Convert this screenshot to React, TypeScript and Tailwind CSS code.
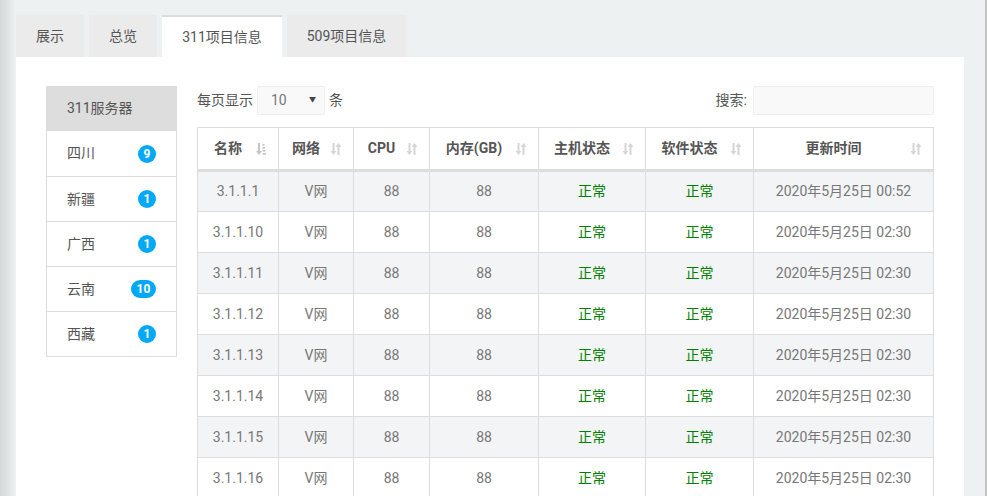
import React from "react";

const rows = [
  ["3.1.1.1", "2020年5月25日 00:52"],
  ["3.1.1.10", "2020年5月25日 02:30"],
  ["3.1.1.11", "2020年5月25日 02:30"],
  ["3.1.1.12", "2020年5月25日 02:30"],
  ["3.1.1.13", "2020年5月25日 02:30"],
  ["3.1.1.14", "2020年5月25日 02:30"],
  ["3.1.1.15", "2020年5月25日 02:30"],
  ["3.1.1.16", "2020年5月25日 02:30"],
];

const SortIcon = ({ active }: { active?: boolean }) =>
  active ? (
    <svg width="10" height="12" viewBox="0 0 10 12" className="absolute right-[12px] top-1/2 -translate-y-1/2">
      <path d="M2 0h2v8h2l-3 4-3-4h2z" fill="#c4c4c4" />
      <rect x="6.5" y="1" width="2" height="1.6" fill="#c4c4c4" />
      <rect x="6.5" y="4" width="2.5" height="1.6" fill="#c4c4c4" />
      <rect x="6.5" y="7" width="3" height="1.6" fill="#c4c4c4" />
      <rect x="6.5" y="10" width="3.5" height="1.6" fill="#c4c4c4" />
    </svg>
  ) : (
    <svg width="10" height="12" viewBox="0 0 10 12" className="absolute right-[12px] top-1/2 -translate-y-1/2">
      <path d="M1.5 0h2v8h2l-3 4-3-4h2z" fill="#d6d6d6" />
      <path d="M6.5 12h2V4h2l-3-4-3 4h2z" fill="#d6d6d6" />
    </svg>
  );

const headers: [string, number, boolean][] = [
  ["名称", 81, true],
  ["网络", 75, false],
  ["CPU", 76, false],
  ["内存(GB)", 109, false],
  ["主机状态", 107, false],
  ["软件状态", 108, false],
  ["更新时间", 180, false],
];

const regions: [string, string][] = [
  ["四川", "9"],
  ["新疆", "1"],
  ["广西", "1"],
  ["云南", "10"],
  ["西藏", "1"],
];

export default function App() {
  return (
    <div
      className="relative w-[987px] h-[496px] overflow-hidden bg-[#eef1f2] text-[14px] text-[#555]"
      style={{ fontFamily: 'Roboto, "Noto Sans CJK SC", sans-serif' }}
    >
      <div className="absolute left-0 top-0 h-full w-[16px] bg-gradient-to-r from-[#d3d7d8] to-[#eef1f2]" />
      <div className="absolute right-0 top-0 h-full w-[2px] bg-[#c2c2c2]" />
      <div className="relative pl-[16px] pr-[23px] pt-[15px]">
        <div className="flex gap-[5px] h-[42px]">
          <div className="flex items-center px-[20px] bg-[#ebebeb]">展示</div>
          <div className="flex items-center px-[20px] bg-[#ebebeb]">总览</div>
          <div className="flex items-center px-[20px] bg-white border-t-2 border-[#dcdcdc] w-[120px] justify-center">311项目信息</div>
          <div className="flex items-center justify-center w-[119px] bg-[#ebebeb]">509项目信息</div>
        </div>
        <div className="bg-white h-[460px] flex pl-[30px] pr-[31px] pt-[29px] gap-[20px]">
          <div className="w-[131px] shrink-0 self-start border border-[#dddddd] border-t-0">
            <div className="h-[45px] flex items-center pl-[20px] bg-[#dddddd]">311服务器</div>
            {regions.map(([name, n], i) => (
              <div
                key={name}
                className={`h-[45px] flex items-center justify-between pl-[20px] pr-[20px] ${i > 0 ? "border-t border-[#dddddd]" : ""}`}
              >
                <span>{name}</span>
                <span
                  className={`h-[18px] ${n.length > 1 ? "w-[25px]" : "w-[18px]"} rounded-full bg-[#03a9f4] text-white text-[12px] font-bold flex items-center justify-center leading-none`}
                >
                  {n}
                </span>
              </div>
            ))}
          </div>
          <div className="flex-1">
            <div className="flex items-center justify-between h-[29px]">
              <div className="flex items-center gap-[4px]">
                <span>每页显示</span>
                <div className="w-[68px] h-[29px] bg-[#f9f9f9] border border-[#eeeeee] rounded-[2px] flex items-center justify-between pl-[13px] pr-[8px]">
                  <span className="text-[#777]">10</span>
                  <span className="text-[7px] text-[#444]">▼</span>
                </div>
                <span>条</span>
              </div>
              <div className="flex items-center gap-[6px]">
                <span>搜索:</span>
                <div className="w-[181px] h-[29px] bg-[#f9f9f9] border border-[#eeeeee] rounded-[2px]" />
              </div>
            </div>
            <table className="mt-[12px] border-collapse table-fixed w-[736px]">
              <thead>
                <tr>
                  {headers.map(([h, w, active]) => (
                    <th
                      key={h}
                      style={{ width: w }}
                      className="relative h-[43px] border border-[#dddddd] border-b-[3px] pl-[10px] pr-[30px] text-center font-bold text-[14px] text-[#555]"
                    >
                      {h}
                      <SortIcon active={active} />
                    </th>
                  ))}
                </tr>
              </thead>
              <tbody>
                {rows.map(([name, time], i) => (
                  <tr key={name} className={i % 2 === 0 ? "bg-[#f3f4f5]" : "bg-white"}>
                    <td className="h-[41px] border border-[#dddddd] text-center text-[#777]">{name}</td>
                    <td className="border border-[#dddddd] text-center text-[#777]">V网</td>
                    <td className="border border-[#dddddd] text-center text-[#777]">88</td>
                    <td className="border border-[#dddddd] text-center text-[#777]">88</td>
                    <td className="border border-[#dddddd] text-center text-[#008000]">正常</td>
                    <td className="border border-[#dddddd] text-center text-[#008000]">正常</td>
                    <td className="border border-[#dddddd] text-center text-[#777]">{time}</td>
                  </tr>
                ))}
              </tbody>
            </table>
          </div>
        </div>
      </div>
    </div>
  );
}
